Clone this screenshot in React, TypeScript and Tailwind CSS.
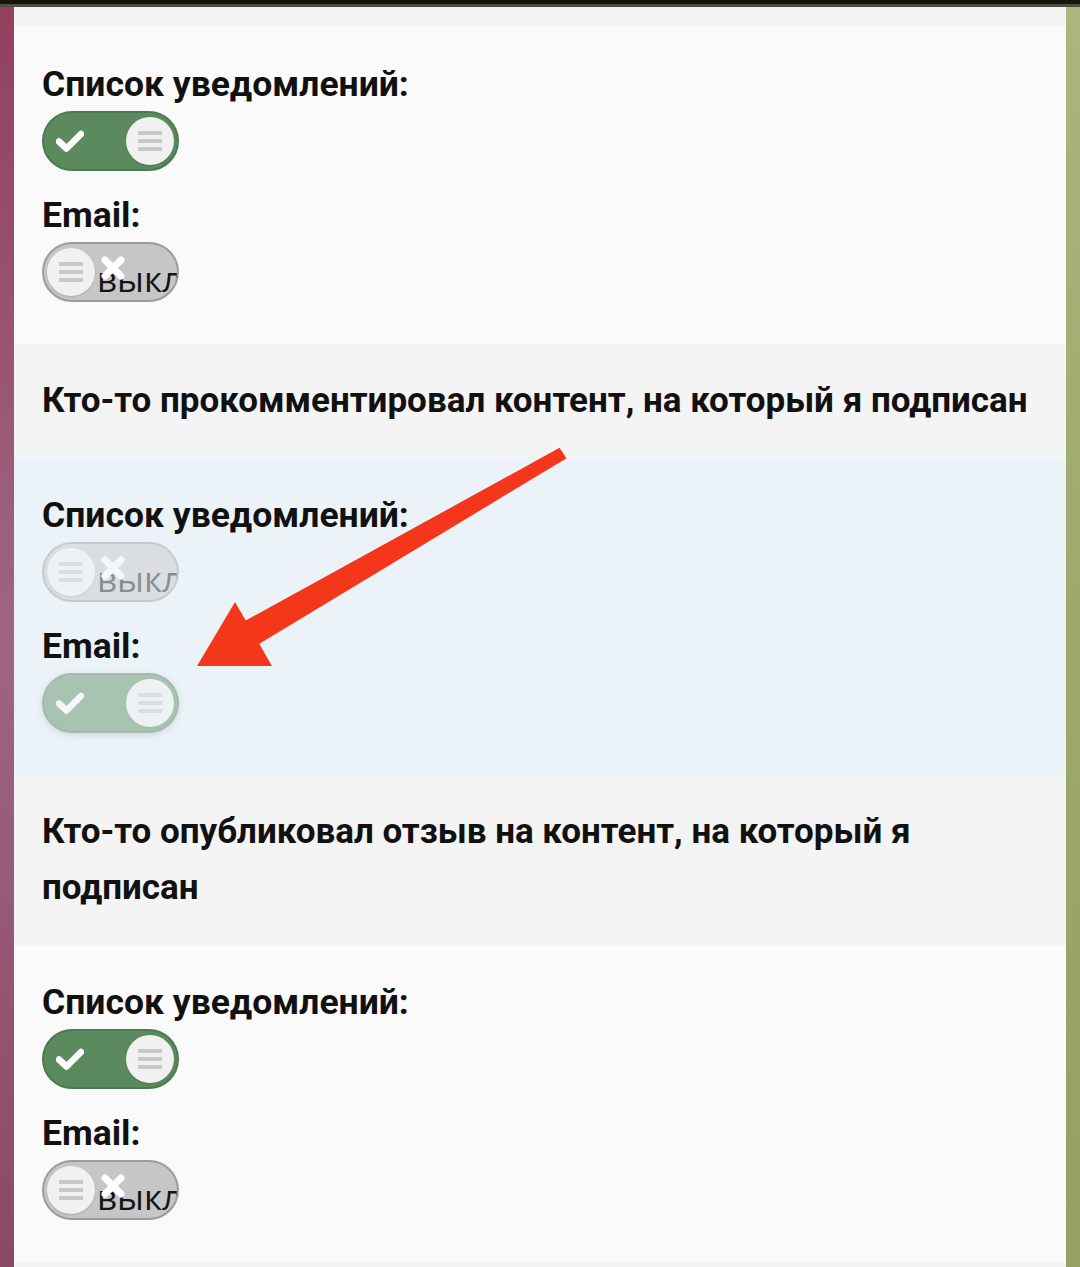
import React from 'react';
import clsx from 'clsx';

const CheckMark = () => (
  <svg width="28" height="22" viewBox="0 0 28 22" className="shrink-0">
    <path d="M3 11.5 L10.5 18.5 L25 4" fill="none" stroke="#ffffff" strokeWidth="6.5" strokeLinecap="round" strokeLinejoin="round" />
  </svg>
);

const CrossMark = () => (
  <svg width="26" height="24" viewBox="0 0 26 24">
    <path d="M5 4 L21 20 M21 4 L5 20" fill="none" stroke="#ffffff" strokeWidth="7" strokeLinecap="round" />
  </svg>
);

const Knob = () => (
  <div className="flex h-[48px] w-[48px] shrink-0 flex-col items-center justify-center gap-[4px] rounded-full bg-[#f1f1f1] shadow-[0_1px_2px_rgba(0,0,0,0.15)]">
    <span className="h-[4px] w-[24px] bg-[#c9c9c9]" />
    <span className="h-[4px] w-[24px] bg-[#c9c9c9]" />
    <span className="h-[4px] w-[24px] bg-[#c9c9c9]" />
  </div>
);

const Toggle = ({ on, faded }: { on: boolean; faded?: boolean }) => {
  if (on) {
    return (
      <div
        className={clsx(
          'flex h-[60px] w-[137px] items-center justify-between overflow-hidden rounded-full border-2 border-[#4c7a50] bg-[#5a8a5e] pl-[12px] pr-[3px]',
          faded && 'opacity-45 shadow-[0_2px_6px_rgba(0,0,0,0.25)]'
        )}
      >
        <CheckMark />
        <Knob />
      </div>
    );
  }
  return (
    <div
      className={clsx(
        'relative flex h-[60px] w-[137px] items-center overflow-hidden rounded-full border-2 border-[#9c9c9c] bg-[#c6c6c6] pl-[3px]',
        faded && 'opacity-45'
      )}
    >
      <Knob />
      <span className="ml-[2px] mt-[12px] whitespace-nowrap font-['Open_Sans',sans-serif] text-[35px] leading-none text-[#141414]">
        выкл
      </span>
      <div className="absolute left-[56px] top-[12px]">
        <CrossMark />
      </div>
    </div>
  );
};

const Row = ({ label, on, faded }: { label: string; on: boolean; faded?: boolean }) => (
  <div className="flex flex-col">
    <div className="h-[40px] whitespace-nowrap text-[35.5px] font-bold leading-[40px] text-[#111]">{label}</div>
    <div className="mt-[7px]">
      <Toggle on={on} faded={faded} />
    </div>
  </div>
);

const Settings = ({ list, email, faded, blue }: { list: boolean; email: boolean; faded?: boolean; blue?: boolean }) => (
  <div className={clsx('flex flex-col gap-[24px] px-[28px] pb-[42px] pt-[37px]', blue ? 'bg-[#ebf3f9]' : 'bg-[#fafafa]')}>
    <Row label="Список уведомлений:" on={list} faded={faded} />
    <Row label="Email:" on={email} faded={faded} />
  </div>
);

const Heading = ({ lines }: { lines: string[] }) => (
  <div className="bg-[#f4f4f4] px-[28px] py-[29px]">
    {lines.map((l) => (
      <div key={l} className="whitespace-nowrap text-[35px] font-bold leading-[56px] text-[#111]">
        {l}
      </div>
    ))}
  </div>
);

export default function App() {
  return (
    <div className="relative flex h-[1267px] w-[1080px] flex-col overflow-hidden bg-[#fafafa] font-['Roboto',sans-serif]">
      <div className="h-[4px] bg-[#14150f]" />
      <div className="h-[3px] bg-[#4d4e42]" />
      <div className="flex flex-1">
        <div className="w-[14px] bg-gradient-to-b from-[#92405e] via-[#9e6583] to-[#8b4866]" />
        <div className="flex flex-1 flex-col">
          <div className="h-[20px] bg-[#f4f4f4]" />
          <Settings list={true} email={false} />
          <Heading lines={['Кто-то прокомментировал контент, на который я подписан']} />
          <Settings list={false} email={true} faded blue />
          <Heading lines={['Кто-то опубликовал отзыв на контент, на который я', 'подписан']} />
          <Settings list={true} email={false} />
          <div className="flex-1 bg-[#f4f4f4]" />
        </div>
        <div className="w-[14px] bg-gradient-to-b from-[#aab67e] via-[#9ea86b] to-[#96a064]" />
      </div>

      <svg className="pointer-events-none absolute left-0 top-0" width="1080" height="1267" viewBox="0 0 1080 1267">
        <polygon points="566.5,458.2 559.5,447.8 238.5,624.5 251.5,648.5" fill="#f4371b" />
        <polygon points="197,666 235,602 272,666" fill="#f4371b" />
      </svg>
    </div>
  );
}
